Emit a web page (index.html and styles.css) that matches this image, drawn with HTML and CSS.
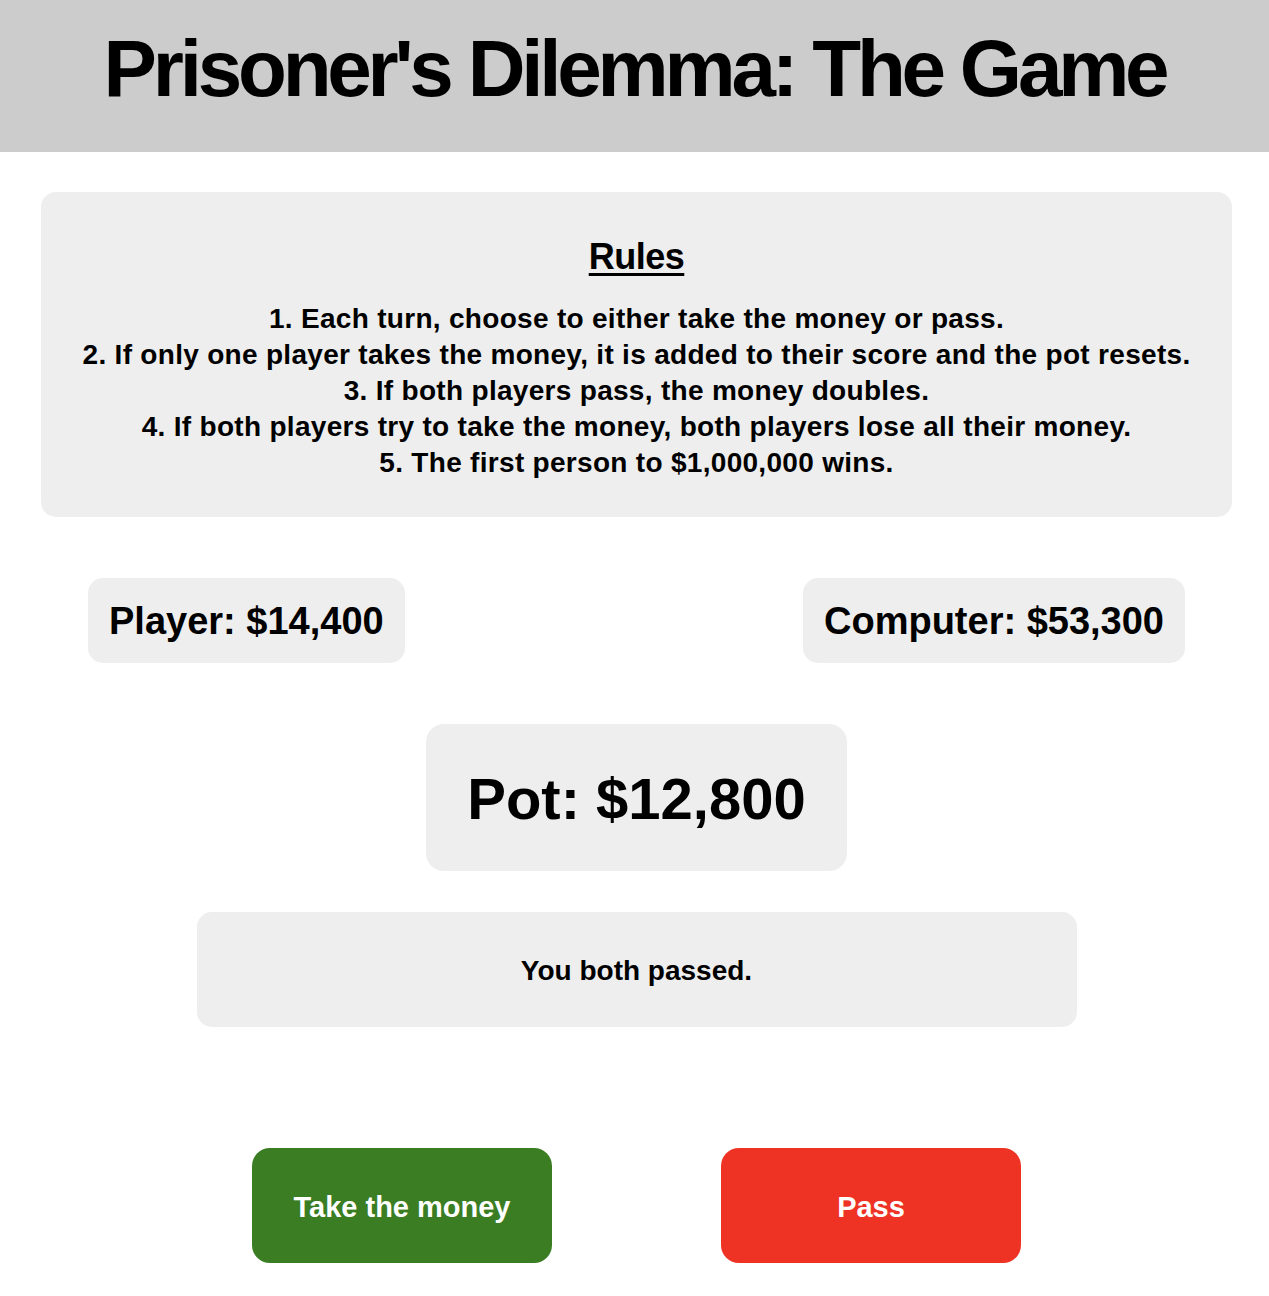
FILE: index.html
```html
<!DOCTYPE html>
<html>
<head>
<meta charset="utf-8">
<title>Prisoner's Dilemma: The Game</title>
<link rel="stylesheet" href="styles.css">
</head>
<body>
<header class="top">
  <h1 class="title">Prisoner's Dilemma: The Game</h1>
</header>
<main class="main">
  <section class="rules">
    <h2 class="rules-title">Rules</h2>
    <ol class="rules-list">
      <li>1. Each turn, choose to either take the money or pass.</li>
      <li>2. If only one player takes the money, it is added to their score and the pot resets.</li>
      <li>3. If both players pass, the money doubles.</li>
      <li>4. If both players try to take the money, both players lose all their money.</li>
      <li>5. The first person to $1,000,000 wins.</li>
    </ol>
  </section>
  <section class="scores">
    <div class="score">Player: $14,400</div>
    <div class="score">Computer: $53,300</div>
  </section>
  <div class="pot">Pot: $12,800</div>
  <div class="message">You both passed.</div>
  <div class="actions">
    <button class="btn btn-take">Take the money</button>
    <button class="btn btn-pass">Pass</button>
  </div>
</main>
</body>
</html>
```

FILE: styles.css
```css
* { box-sizing: border-box; }
body {
  margin: 0;
  background: #fff;
  color: #000;
  font-family: "Liberation Sans", Arial, sans-serif;
  font-weight: bold;
}
.top {
  background: #cccccc;
  height: 152px;
  display: flex;
  align-items: center;
  justify-content: center;
  padding-bottom: 14px;
}
.title {
  margin: 0;
  font-size: 80px;
  line-height: 1;
  font-weight: bold;
  letter-spacing: -4.2px;
}
.main {
  padding: 40px 37px 0 41px;
  display: flex;
  flex-direction: column;
  align-items: center;
}
.rules {
  width: 100%;
  background: #eeeeee;
  border-radius: 15px;
  padding: 43px 0 36px;
  text-align: center;
}
.rules-title {
  margin: 0;
  font-size: 36px;
  line-height: 44px;
  letter-spacing: -0.5px;
  text-decoration: underline;
  text-underline-offset: 4px;
}
.rules-list {
  list-style: none;
  margin: 22px 0 0;
  padding: 0;
  font-size: 28px;
  line-height: 36px;
  letter-spacing: 0.3px;
}
.scores {
  width: 100%;
  display: flex;
  justify-content: space-between;
  padding: 0 47px;
  margin-top: 61px;
}
.score {
  background: #eeeeee;
  border-radius: 15px;
  height: 85px;
  line-height: 87px;
  padding: 0 21px;
  font-size: 38px;
}
.pot {
  margin-top: 61px;
  background: #eeeeee;
  border-radius: 18px;
  width: 421px;
  height: 147px;
  line-height: 149px;
  text-align: center;
  font-size: 58px;
}
.message {
  margin-top: 41px;
  background: #eeeeee;
  border-radius: 15px;
  width: 880px;
  height: 115px;
  line-height: 117px;
  text-align: center;
  font-size: 28px;
}
.actions {
  margin-top: 121px;
  display: flex;
  gap: 169px;
}
.btn {
  width: 300px;
  height: 115px;
  border: none;
  border-radius: 18px;
  color: #fff;
  font-family: inherit;
  font-weight: bold;
  font-size: 29px;
  padding: 4px 0 0;
}
.btn-take { background: #3a7d23; }
.btn-pass { background: #ee3224; }
```
